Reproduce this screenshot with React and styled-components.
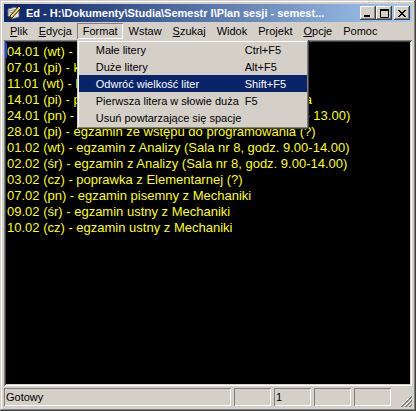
import React from 'react'
import styled, { createGlobalStyle } from 'styled-components'

const GlobalStyle = createGlobalStyle`
    html, body{
        margin: 0;
        padding: 0;
        background: #D4D0C8;
    }
    *{
        box-sizing: border-box;
    }
`

const menus = [
    { label: 'Plik', key: 'P' },
    { label: 'Edycja', key: 'E' },
    { label: 'Format', open: true },
    { label: 'Wstaw' },
    { label: 'Szukaj', key: 'S' },
    { label: 'Widok' },
    { label: 'Projekt' },
    { label: 'Opcje', key: 'O' },
    { label: 'Pomoc' },
]

const formatItems = [
    { label: 'Małe litery', shortcut: 'Ctrl+F5' },
    { label: 'Duże litery', shortcut: 'Alt+F5' },
    { label: 'Odwróć wielkość liter', shortcut: 'Shift+F5', active: true },
    { label: 'Pierwsza litera w słowie duża', shortcut: 'F5' },
    { label: 'Usuń powtarzające się spacje', shortcut: '' },
]

const lines = [
    '04.01 (wt) - kolokwium z Fizyki',
    '07.01 (pi) - kolokwium z Analizy',
    '11.01 (wt) - kolokwium z Algebry',
    '14.01 (pi) - prezentacje projektowe z Programowania',
    '24.01 (pn) - egzamin z Fizyki (Sala nr 3, godz. 9.00 - 13.00)',
    '28.01 (pi) - egzamin ze wstępu do programowania (?)',
    '01.02 (wt) - egzamin z Analizy (Sala nr 8, godz. 9.00-14.00)',
    '02.02 (śr) - egzamin z Analizy (Sala nr 8, godz. 9.00-14.00)',
    '03.02 (cz) - poprawka z Elementarnej (?)',
    '07.02 (pn) - egzamin pisemny z Mechaniki',
    '09.02 (śr) - egzamin ustny z Mechaniki',
    '10.02 (cz) - egzamin ustny z Mechaniki',
]

const AppIcon = () => (
    <svg width="16" height="16" viewBox="0 0 16 16">
        <path d="M2 4 L9 2 L13 5 L13 12 L6 14 L2 11 Z" fill="#E8E8E8" stroke="#606060" strokeWidth="1" />
        <path d="M3 6 L9 4.5 M3 8 L10 6.5 M4 10 L11 8.5" stroke="#9A9A9A" strokeWidth="1" />
        <path d="M2 15 L4 11 L13 1 L15 3 L6 13 Z" fill="#F2D24A" stroke="#202020" strokeWidth="1" />
        <path d="M2 15 L4 11 L6 13 Z" fill="#303030" />
    </svg>
)

const ItemLabel = ({ label, hotkey }) => {
    if (!hotkey) return label
    return (
        <>
            <u>{label[0]}</u>
            {label.slice(1)}
        </>
    )
}

const App = () => {
    return (
        <>
            <GlobalStyle />
            <Window>
                <TitleBar>
                    <AppIcon />
                    <Title>Ed - H:\Dokumenty\Studia\Semestr I\Plan sesji - semest...</Title>
                    <Controls>
                        <CaptionButton>
                            <svg width="8" height="7" viewBox="0 0 8 7"><rect x="0" y="5" width="6" height="2" fill="#000" /></svg>
                        </CaptionButton>
                        <CaptionButton>
                            <svg width="9" height="9" viewBox="0 0 9 9"><path d="M0.5 1 H8.5 V8.5 H0.5 Z" fill="none" stroke="#000" /><rect x="0" y="0" width="9" height="2" fill="#000" /></svg>
                        </CaptionButton>
                        <CaptionButton $gap>
                            <svg width="8" height="7" viewBox="0 0 8 7"><path d="M0.5 0 L7.5 7 M1.5 0 L8.5 7 M7.5 0 L0.5 7 M8.5 0 L1.5 7" stroke="#000" strokeWidth="1" transform="translate(-0.5 0)" /></svg>
                        </CaptionButton>
                    </Controls>
                </TitleBar>

                <MenuBar>
                    {menus.map(m => (
                        <MenuItem key={m.label} $open={m.open}>
                            <ItemLabel label={m.label} hotkey={m.key} />
                            {m.open && (
                                <Dropdown>
                                    {formatItems.map(it => (
                                        <DropItem key={it.label} $active={it.active}>
                                            <span>{it.label}</span>
                                            <span>{it.shortcut}</span>
                                        </DropItem>
                                    ))}
                                </Dropdown>
                            )}
                        </MenuItem>
                    ))}
                </MenuBar>

                <Editor>
                    <Caret />
                    {lines.map(l => (
                        <Line key={l}>{l}</Line>
                    ))}
                </Editor>

                <StatusBar>
                    <Panel $w="227px">Gotowy</Panel>
                    <Panel $w="37px" />
                    <Panel $w="37px">1</Panel>
                    <Panel $w="37px" />
                    <Panel $w="37px" />
                    <Grip>
                        <svg width="12" height="12" viewBox="0 0 12 12">
                            <path d="M11 1 L1 11 M11 5 L5 11 M11 9 L9 11" stroke="#fff" strokeWidth="1" />
                            <path d="M12 1 L1 12 M12 2 L2 12 M12 5 L5 12 M12 6 L6 12 M12 9 L9 12 M12 10 L10 12" stroke="#808080" strokeWidth="1" />
                        </svg>
                    </Grip>
                </StatusBar>
            </Window>
        </>
    )
}

export default App

const Window = styled.div`
    width: 416px;
    height: 411px;
    padding: 4px;
    background: #D4D0C8;
    display: flex;
    flex-direction: column;
    font-family: "Liberation Sans", Arial, sans-serif;
    font-size: 11px;
    color: #000;
    box-shadow: inset -1px -1px #404040, inset 1px 1px #D4D0C8, inset -2px -2px #808080, inset 2px 2px #fff;
`

const TitleBar = styled.div`
    height: 18px;
    flex-shrink: 0;
    display: flex;
    align-items: center;
    padding: 0 2px 0 2px;
    background: linear-gradient(to right, #0A246A, #A6CAF0);
    svg{
        flex-shrink: 0;
    }
`

const Title = styled.div`
    flex: 1;
    margin-left: 4px;
    color: #fff;
    font-weight: bold;
    font-size: 11px;
    white-space: nowrap;
    overflow: hidden;
`

const Controls = styled.div`
    display: flex;
    align-items: center;
`

const CaptionButton = styled.div`
    width: 16px;
    height: 14px;
    margin-left: ${p => p.$gap ? '2px' : '0'};
    background: #D4D0C8;
    display: flex;
    align-items: center;
    justify-content: center;
    box-shadow: inset -1px -1px #404040, inset 1px 1px #fff, inset -2px -2px #808080, inset 2px 2px #D4D0C8;
`

const MenuBar = styled.div`
    height: 18px;
    flex-shrink: 0;
    display: flex;
    align-items: center;
`

const MenuItem = styled.div`
    position: relative;
    height: 16px;
    padding: 0 5px 0 6px;
    display: flex;
    align-items: center;
    white-space: nowrap;
    box-shadow: ${p => p.$open ? 'inset 1px 1px #808080, inset -1px -1px #fff' : 'none'};
    u{
        text-decoration: underline;
    }
`

const Dropdown = styled.div`
    position: absolute;
    top: 17px;
    left: 0;
    width: 232px;
    padding: 1px 2px 3px;
    background: #D4D0C8;
    box-shadow: inset -1px -1px #404040, inset 1px 1px #D4D0C8, inset -2px -2px #808080, inset 2px 2px #fff;
    z-index: 5;
`

const DropItem = styled.div`
    height: 17px;
    display: grid;
    grid-template-columns: 149px 1fr;
    align-items: center;
    padding-left: 17px;
    background: ${p => p.$active ? '#0A246A' : 'transparent'};
    color: ${p => p.$active ? '#fff' : '#000'};
`

const Editor = styled.div`
    position: relative;
    flex: 1;
    padding: 4px 3px;
    background: #000;
    overflow: hidden;
    font-family: "Liberation Sans", Arial, sans-serif;
    font-size: 13px;
    color: #FFFF00;
    box-shadow: inset 1px 1px #808080, inset -1px -1px #fff, inset 2px 2px #404040, inset -2px -2px #D4D0C8;
`

const Line = styled.div`
    height: 16px;
    line-height: 16px;
    white-space: nowrap;
`

const Caret = styled.div`
    position: absolute;
    left: 1px;
    top: 3px;
    width: 2px;
    height: 15px;
    background: #2040FF;
`

const StatusBar = styled.div`
    height: 19px;
    margin-top: 2px;
    flex-shrink: 0;
    display: flex;
    gap: 3px;
`

const Panel = styled.div`
    width: ${p => p.$w};
    height: 18px;
    padding: 0 2px;
    display: flex;
    align-items: center;
    box-shadow: inset 1px 1px #808080, inset -1px -1px #fff;
`

const Grip = styled.div`
    flex: 1;
    display: flex;
    align-items: flex-end;
    justify-content: flex-end;
`
